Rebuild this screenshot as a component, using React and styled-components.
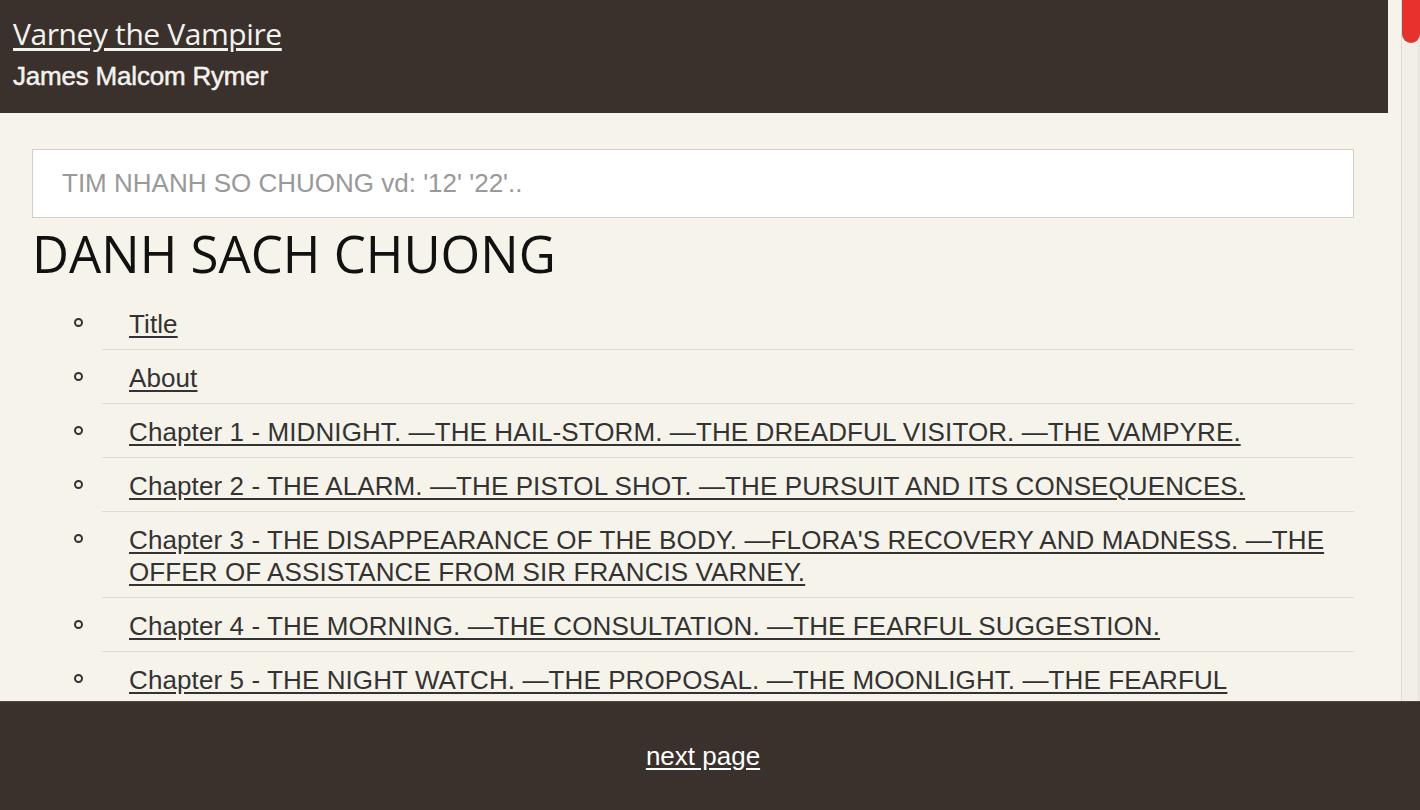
import React from "react";
import styled, { createGlobalStyle } from "styled-components";

const GlobalStyle = createGlobalStyle`
  html, body {
    margin: 0;
    height: 100%;
    overflow: hidden;
    background: #f6f4ea;
  }
  #root {
    height: 100%;
  }
`;

const Shell = styled.div`
  height: 100vh;
  display: grid;
  grid-template-rows: 1fr 109px;
`;

const Viewport = styled.div`
  display: flex;
  min-height: 0;
  overflow: hidden;
`;

const Page = styled.div`
  flex: 1;
  min-width: 0;
  overflow: hidden;
`;

const ScrollTrack = styled.div`
  width: 18px;
  flex-shrink: 0;
  background: #f1efe6;
  border-left: 1px solid #dcd9d0;
  box-shadow: inset -3px 0 0 #ebe8df;
`;

const ScrollThumb = styled.div`
  height: 43px;
  background: #e8312d;
  border-radius: 0 0 9px 9px;
`;

const Header = styled.header`
  margin-right: 13px;
  height: 113px;
  box-sizing: border-box;
  padding: 13px 13px 0;
  background: #3a312c;
  color: #f4f2ee;
`;

const BookTitle = styled.a`
  display: inline-block;
  font-family: "Open Sans", "Noto Sans", sans-serif;
  font-size: 30px;
  letter-spacing: -0.4px;
  color: #f4f2ee;
  text-decoration: underline;
  text-underline-offset: 3px;
`;

const Author = styled.div`
  margin-top: 7px;
  font-family: "Liberation Sans", Arial, sans-serif;
  font-size: 26px;
  letter-spacing: -0.2px;
  -webkit-text-stroke: 0.5px #f4f2ee;
`;

const Content = styled.main`
  padding: 36px 47px 0 32px;
`;

const SearchInput = styled.input`
  display: block;
  width: 100%;
  height: 69px;
  box-sizing: border-box;
  margin: 0;
  padding: 0 29px;
  border: 1px solid #cfcfcf;
  background: #fff;
  font-family: "Liberation Sans", Arial, sans-serif;
  font-size: 26px;
  color: #333;
  outline: none;

  &::placeholder {
    color: #999;
  }
`;

const Heading = styled.h1`
  margin: 0;
  font-family: "Open Sans", "Noto Sans", sans-serif;
  font-size: 51px;
  font-weight: 400;
  color: #111;
`;

const ChapterList = styled.ul`
  list-style: none;
  margin: 8px 0 0;
  padding: 0 0 0 70px;
  font-family: "Liberation Sans", Arial, sans-serif;
  font-size: 26px;
  line-height: 32px;
  letter-spacing: 0.1px;
`;

const Chapter = styled.li`
  position: relative;
  padding: 12px 0 9px 27px;
  border-bottom: 1px solid #dddcd6;

  &::before {
    content: "";
    position: absolute;
    left: -28px;
    top: 22px;
    width: 5px;
    height: 5px;
    border: 2px solid #333;
    border-radius: 50%;
  }
`;

const ChapterLink = styled.a`
  color: #333;
  text-decoration: underline;
  text-underline-offset: 3px;
`;

const Footer = styled.footer`
  display: flex;
  align-items: center;
  justify-content: center;
  padding-right: 14px;
  background: #3a312c;
  border-top: 1px solid #4e4640;
`;

const NextLink = styled.a`
  font-family: "Liberation Sans", Arial, sans-serif;
  font-size: 26px;
  color: #fff;
  text-decoration: underline;
  text-underline-offset: 3px;
`;

const chapters = [
  "Title",
  "About",
  "Chapter 1 - MIDNIGHT. —THE HAIL-STORM. —THE DREADFUL VISITOR. —THE VAMPYRE.",
  "Chapter 2 - THE ALARM. —THE PISTOL SHOT. —THE PURSUIT AND ITS CONSEQUENCES.",
  "Chapter 3 - THE DISAPPEARANCE OF THE BODY. —FLORA'S RECOVERY AND MADNESS. —THE OFFER OF ASSISTANCE FROM SIR FRANCIS VARNEY.",
  "Chapter 4 - THE MORNING. —THE CONSULTATION. —THE FEARFUL SUGGESTION.",
  "Chapter 5 - THE NIGHT WATCH. —THE PROPOSAL. —THE MOONLIGHT. —THE FEARFUL ADVENTURE.",
];

export default function App() {
  return (
    <>
      <GlobalStyle />
      <Shell>
        <Viewport>
          <Page>
            <Header>
              <BookTitle href="#">Varney the Vampire</BookTitle>
              <Author>James Malcom Rymer</Author>
            </Header>
            <Content>
              <SearchInput placeholder="TIM NHANH SO CHUONG vd: '12' '22'.." />
              <Heading>DANH SACH CHUONG</Heading>
              <ChapterList>
                {chapters.map((c) => (
                  <Chapter key={c}>
                    <ChapterLink href="#">{c}</ChapterLink>
                  </Chapter>
                ))}
              </ChapterList>
            </Content>
          </Page>
          <ScrollTrack>
            <ScrollThumb />
          </ScrollTrack>
        </Viewport>
        <Footer>
          <NextLink href="#">next page</NextLink>
        </Footer>
      </Shell>
    </>
  );
}
